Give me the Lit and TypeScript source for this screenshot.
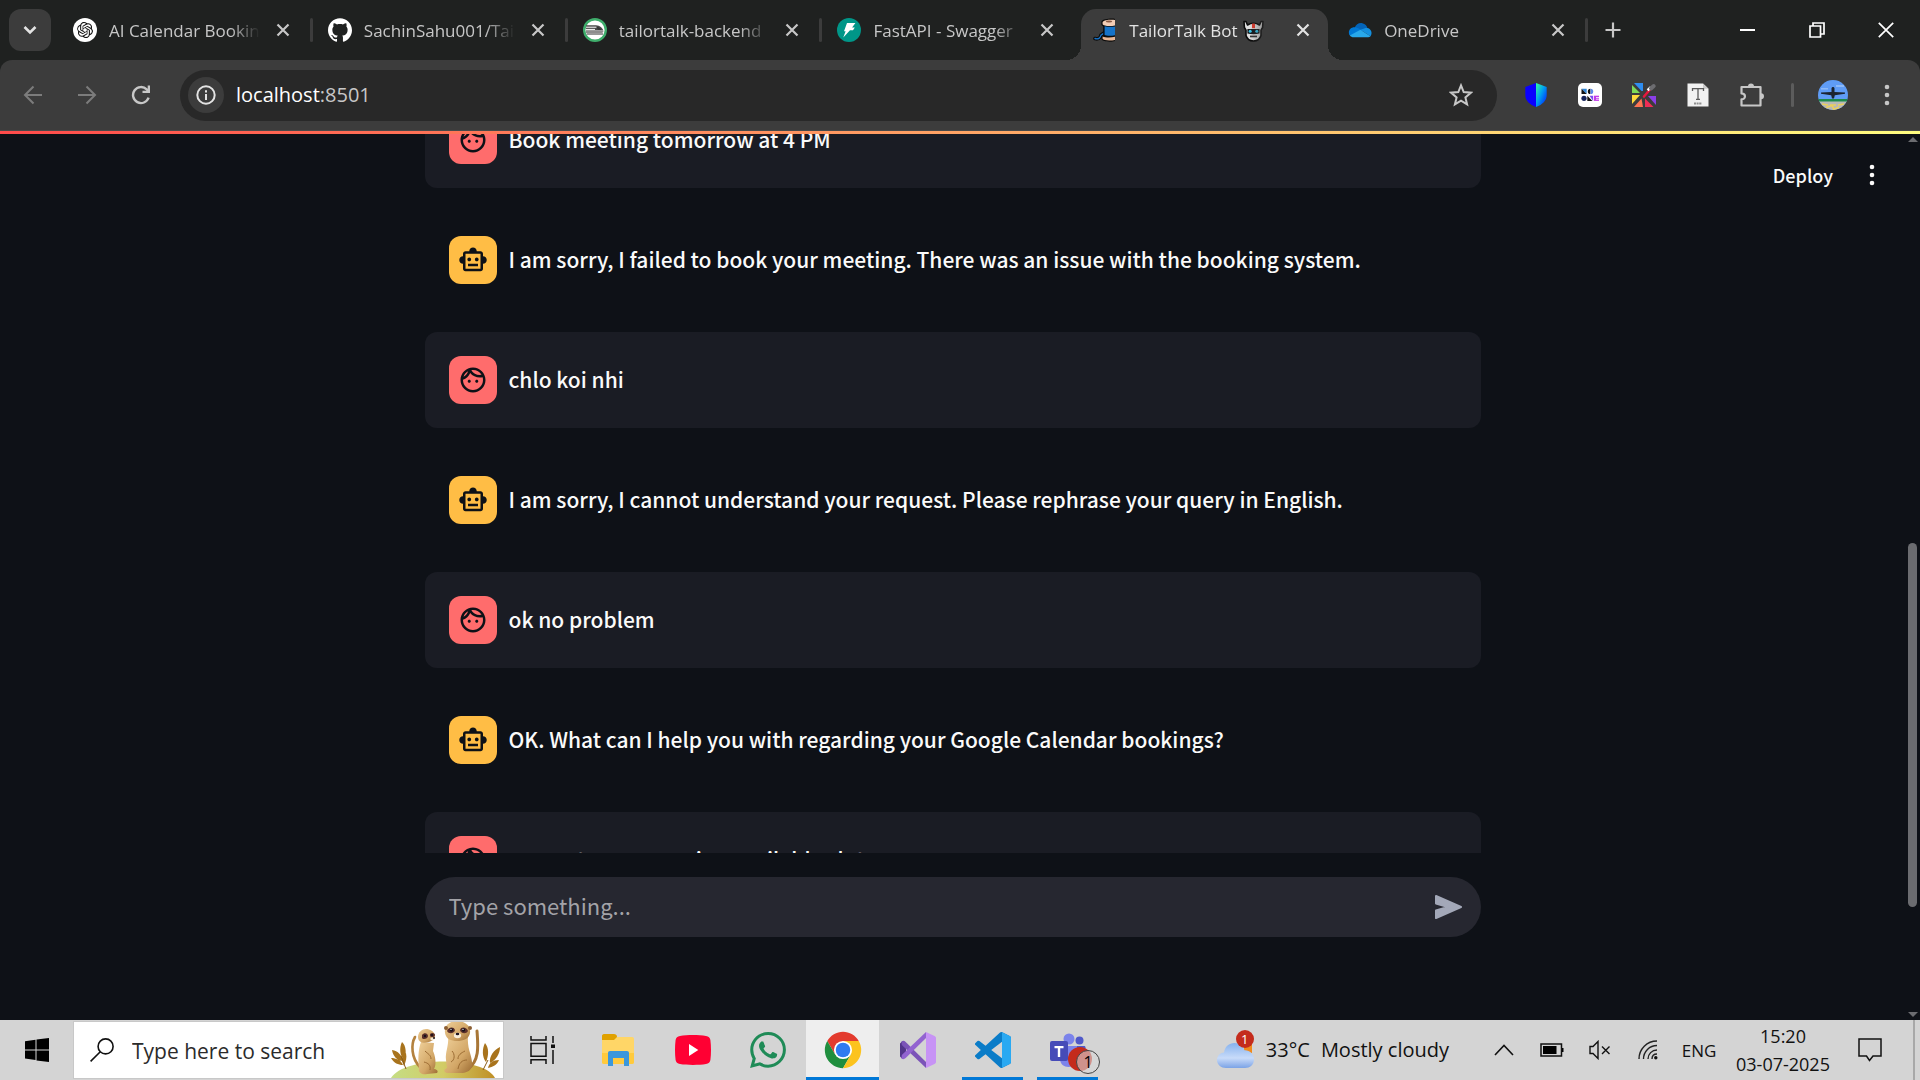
import { LitElement, html, svg, css, nothing } from "lit";
import type { TemplateResult, SVGTemplateResult } from "lit";
import { customElement, property, query } from "lit/decorators.js";
import { classMap } from "lit/directives/class-map.js";
import { styleMap } from "lit/directives/style-map.js";

type Role = "user" | "assistant";

interface Message {
  role: Role;
  text: string;
}

interface Tab {
  title: string;
  icon: TemplateResult;
  active?: boolean;
  emoji?: TemplateResult;
  divider?: boolean;
}

const icon = (
  width: number,
  height: number,
  viewBox: string,
  body: SVGTemplateResult,
) => html`<svg
  width=${width}
  height=${height}
  viewBox=${viewBox}
  fill="none"
  aria-hidden="true"
>
  ${body}
</svg>`;

/* ---------- Tab icons ---------- */

const openAiIcon = icon(24, 24, "0 0 24 24", svg`
  <circle cx="12" cy="12" r="12" fill="#fff"/>
  <path transform="translate(4 4) scale(.667)" fill="#111" d="M22.2819 9.8211a5.9847 5.9847 0 0 0-.5157-4.9108 6.0462 6.0462 0 0 0-6.5098-2.9A6.0651 6.0651 0 0 0 4.9807 4.1818a5.9847 5.9847 0 0 0-3.9977 2.9 6.0462 6.0462 0 0 0 .7427 7.0966 5.98 5.98 0 0 0 .511 4.9107 6.051 6.051 0 0 0 6.5146 2.9001A5.9847 5.9847 0 0 0 13.2599 24a6.0557 6.0557 0 0 0 5.7718-4.2058 5.9894 5.9894 0 0 0 3.9977-2.9001 6.0557 6.0557 0 0 0-.7475-7.0729zm-9.022 12.6081a4.4755 4.4755 0 0 1-2.8764-1.0408l.1419-.0804 4.7783-2.7582a.7948.7948 0 0 0 .3927-.6813v-6.7369l2.02 1.1686a.071.071 0 0 1 .038.052v5.5826a4.504 4.504 0 0 1-4.4945 4.4944zm-9.6607-4.1254a4.4708 4.4708 0 0 1-.5346-3.0137l.142.0852 4.783 2.7582a.7712.7712 0 0 0 .7806 0l5.8428-3.3685v2.3324a.0804.0804 0 0 1-.0332.0615L9.74 19.9502a4.4992 4.4992 0 0 1-6.1408-1.6464zM2.3408 7.8956a4.485 4.485 0 0 1 2.3655-1.9728V11.6a.7664.7664 0 0 0 .3879.6765l5.8144 3.3543-2.0201 1.1685a.0757.0757 0 0 1-.071 0l-4.8303-2.7865A4.504 4.504 0 0 1 2.3408 7.872zm16.5963 3.8558L13.1038 8.364 15.1192 7.2a.0757.0757 0 0 1 .071 0l4.8303 2.7913a4.4944 4.4944 0 0 1-.6765 8.1042v-5.6772a.79.79 0 0 0-.407-.667zm2.0107-3.0231l-.142-.0852-4.7735-2.7818a.7759.7759 0 0 0-.7854 0L9.409 9.2297V6.8974a.0662.0662 0 0 1 .0284-.0615l4.8303-2.7866a4.4992 4.4992 0 0 1 6.6802 4.66zM8.3065 12.863l-2.02-1.1638a.0804.0804 0 0 1-.038-.0567V6.0742a4.4992 4.4992 0 0 1 7.3757-3.4537l-.142.0805L8.704 5.459a.7948.7948 0 0 0-.3927.6813zm1.0976-2.3654l2.602-1.4998 2.6069 1.4998v2.9994l-2.5974 1.4997-2.6067-1.4997Z"/>`);

const gitHubIcon = icon(24, 24, "0 0 24 24", svg`
  <path fill="#fff" d="M12 .297c-6.63 0-12 5.373-12 12 0 5.303 3.438 9.8 8.205 11.385.6.113.82-.258.82-.577 0-.285-.01-1.04-.015-2.04-3.338.724-4.042-1.61-4.042-1.61C4.422 18.07 3.633 17.7 3.633 17.7c-1.087-.744.084-.729.084-.729 1.205.084 1.838 1.236 1.838 1.236 1.07 1.835 2.809 1.305 3.495.998.108-.776.417-1.305.76-1.605-2.665-.3-5.466-1.332-5.466-5.93 0-1.31.465-2.38 1.235-3.22-.135-.303-.54-1.523.105-3.176 0 0 1.005-.322 3.3 1.23.96-.267 1.98-.399 3-.405 1.02.006 2.04.138 3 .405 2.28-1.552 3.285-1.23 3.285-1.23.645 1.653.24 2.873.12 3.176.765.84 1.23 1.91 1.23 3.22 0 4.61-2.805 5.625-5.475 5.92.42.36.81 1.096.81 2.22 0 1.606-.015 2.896-.015 3.286 0 .315.21.69.825.57C20.565 22.092 24 17.592 24 12.297c0-6.627-5.373-12-12-12"/>`);

const trainIcon = icon(24, 24, "0 0 24 24", svg`
  <circle cx="12" cy="12" r="10.8" fill="#fff" stroke="#3fae6c" stroke-width="2.4"/>
  <path fill="#4a4a4a" d="M3 7.2h10c4 .3 6.600 2.600 7.400 5.400H3z"/>
  <path stroke="#fff" stroke-width="1" d="M3 9.200h10.500M3 11.400h9"/>
  <path fill="#8d8d8d" d="M3 12.800h17.400c.2 1.400-.6 2.200-2 2.200H3z"/>
  <path fill="#333" d="M13.500 8.800c2.400.1 3.900 1.400 4.600 3h-3.200z"/>
  <path stroke="#333" stroke-width="1" d="M3.600 16h16.600"/>`);

const fastApiIcon = icon(24, 24, "0 0 24 24", svg`
  <circle cx="12" cy="12" r="12" fill="#009688"/>
  <path fill="#fff" d="M10 5h8.400l-3.300 4.600h2.700L16 12.300h-3L6.300 19.400l2.300-6.100H7z"/>`);

const spoolIcon = icon(24, 24, "0 0 24 24", svg`
  <path stroke="#0b0b0b" stroke-width="3.600" stroke-linecap="round" d="M2 20.500c3.200 1 5.400-.4 6-3.400l3-2"/>
  <path stroke="#1673c8" stroke-width="1.400" stroke-linecap="round" d="M2 20.500c3.200 1 5.400-.4 6-3.400l3-2"/>
  <path fill="#0b0b0b" d="M8.400 3.400C10 .6 20 0 22 1v22c-4 1.300-12.400.8-13.600-1.700v-3l1.800-1.600V8.600L8.400 7z"/>
  <path fill="#f3cdb5" d="M9.600 4C11 1.600 19 1.400 22 2v5.500c-5 1.200-11.600.6-12.400-1.200z"/>
  <path fill="#1673c8" d="M11.600 8.200c3 .8 7 .9 10.400.2v8.800c-4 .8-8.400.7-10.400-.2z"/>
  <path fill="#e9b795" d="M9.600 18.400c3 1.500 8.400 1.400 12.400.4v3.100c-4.400 1-11.400.8-12.400-1.100z"/>
  <ellipse cx="16" cy="3.400" rx="3.200" ry="1" fill="#8a5a44"/>`);

const cyborgIcon = icon(21, 22, "0 0 21 22", svg`
  <path fill="#dedede" stroke="#0b0b0b" stroke-width="1.600" stroke-linejoin="round" d="M1 1.500h2L4.500 5C8 2.600 13 2.600 16.500 5L18 1.500h2l-.4 6-1.600 2.700v5.300c-1 3.400-4 5.500-7.500 5.500S4 18.900 3 15.500v-5.300L1.400 7.500z"/>
  <path fill="#e23b2e" d="M9 3.600h3v4.600H9z"/>
  <path fill="#17191c" d="M4.400 9h12.200v4.600c-3.600 1-8.600 1-12.200 0z"/>
  <circle cx="7.200" cy="11.300" r="1.500" fill="#35c3e8"/><circle cx="13.800" cy="11.300" r="1.500" fill="#35c3e8"/>
  <path fill="#333" d="M7 15.600h7v1.700H7z"/>`);

const oneDriveIcon = icon(24, 16, "0 0 26 18", svg`
  <path fill="#0364b8" d="M7 6.500C8.400 2.300 12 .6 15.600 1.300c3.200.6 5.200 3 5.800 5.700L13 11z"/>
  <path fill="#0078d4" d="M1 14.500C-.8 9.600 2.400 5.800 6.600 5.800c2 0 3.400.6 5 1.600L15 9.500 6 17z"/>
  <path fill="#1490df" d="m13.500 8.600 4.200-1.400c4.300-1.600 8.300 1 8.300 5.200 0 1.400-.5 2.600-1.200 3.500z"/>
  <path fill="#28a8ea" d="m1.500 15.200 12-6.600 11.300 7.300c-.9.800-2 1.300-3.500 1.300H6c-2 0-3.500-.8-4.500-2z"/>`);

/* ---------- Browser controls ---------- */

const closeIcon = icon(14, 14, "0 0 14 14", svg`<path stroke="currentColor" stroke-width="2.200" d="m1.500 1.500 11 11m0-11-11 11"/>`);
const plusIcon = icon(16, 16, "0 0 16 16", svg`<path stroke="currentColor" stroke-width="2.200" d="M8 .5v15M.5 8h15"/>`);
const chevronIcon = icon(14, 10, "0 0 14 10", svg`<path stroke="currentColor" stroke-width="2.600" d="m1.500 2 5.500 5.500L12.500 2"/>`);
const minimizeIcon = icon(16, 16, "0 0 16 16", svg`<path fill="currentColor" d="M0 7h15v2H0z"/>`);
const restoreIcon = icon(16, 16, "0 0 16 16", svg`<path stroke="currentColor" stroke-width="1.700" d="M1 4h10.500v11H1zM4 4V1h11v11h-3.500"/>`);
const windowCloseIcon = icon(16, 16, "0 0 16 16", svg`<path stroke="currentColor" stroke-width="1.700" d="m.8.800 14.400 14.400m0-14.400L.8 15.200"/>`);
const backIcon = icon(20, 20, "0 0 20 20", svg`<path stroke="currentColor" stroke-width="2" d="M19 10H2m8.500-8.500L2 10l8.500 8.500"/>`);
const forwardIcon = icon(20, 20, "0 0 20 20", svg`<path stroke="currentColor" stroke-width="2" d="M1 10h17M9.500 1.500 18 10l-8.500 8.500"/>`);
const reloadIcon = icon(20, 20, "0 0 20 20", svg`
  <path stroke="currentColor" stroke-width="2.400" d="M17.600 12.700A8 8 0 1 1 15.700 4.400L17.500 6.300"/>
  <path fill="currentColor" d="M19 .5V8h-7.500V5.700h5.200V.5z"/>`);
const infoIcon = icon(20, 20, "0 0 20 20", svg`
  <circle cx="10" cy="10" r="8.700" stroke="currentColor" stroke-width="2"/>
  <path fill="currentColor" d="M9 9h2v6H9zM9 5.200h2v2.200H9z"/>`);
const starIcon = icon(24, 24, "0 0 24 24", svg`<path stroke="currentColor" stroke-width="2" d="m12 2.400 2.700 6.700 7.200.6-5.500 4.700 1.700 7L12 17.600l-6.100 3.800 1.700-7-5.500-4.700 7.200-.6z"/>`);
const dotsIcon = icon(6, 22, "0 0 6 22", svg`<circle cx="3" cy="3" r="2.300" fill="currentColor"/><circle cx="3" cy="11" r="2.300" fill="currentColor"/><circle cx="3" cy="19" r="2.300" fill="currentColor"/>`);
const puzzleIcon = icon(26, 26, "0 0 26 26", svg`
  <path stroke="currentColor" stroke-width="2.200" stroke-linejoin="round" d="M2.500 5h19v18.500h-19v-6.200c4.400.2 4.800-5.600 0-5.900z"/>
  <path fill="currentColor" d="M9 4.500a3 3 0 0 1 6 0zM22 11.300a3 3 0 0 1 0 6z"/>`);

const shieldIcon = icon(24, 24, "0 0 24 24", svg`
  <defs><linearGradient id="shield" x1="0" y1="0" x2="1" y2="1"><stop stop-color="#36ff96"/><stop offset=".45" stop-color="#00a2f0"/><stop offset="1" stop-color="#0010ff"/></linearGradient></defs>
  <path fill="#0a00ff" d="M12 0 1.300 4v8c0 5.600 4.200 9.600 10.700 12z"/>
  <path fill="url(#shield)" d="m12 0 10.700 4v8c0 5.600-4.200 9.600-10.700 12z"/>`);
const shapesIcon = icon(24, 24, "0 0 24 24", svg`
  <rect width="24" height="24" rx="5" fill="#fff"/>
  <path fill="#2e86d8" d="M3.500 5.800h5.200v5.200z"/><path fill="#111" d="M3.500 5.800V11h5.200z"/>
  <path fill="#111" d="M12.400 5.800V11a2.600 2.600 0 0 1 0-5.200"/><path fill="#5b8be8" d="M12.600 5.800a2.600 2.600 0 0 1 0 5.200z"/>
  <circle cx="6" cy="15.300" r="2.600" fill="#16245a"/><path fill="#111" d="M9.300 12.700v5.200h5.200z"/>
  <path fill="#7a4df0" d="M11.500 12.700H15v5z"/><path fill="#c23bea" d="M15.800 12.700H21v5.200h-5.200z"/><path stroke="#fff" stroke-width=".8" d="M18 14.500h3M18 16.200h3"/>`);
const wheelIcon = icon(26, 26, "0 0 26 26", svg`
  <path fill="#2f8df0" d="M3 1h9v8L10.500 9z"/><path fill="#7ed957" d="m1 3 8 8H1z"/>
  <path fill="#ffd93b" d="M1 13h8l-8 9z"/><path fill="#ff7452" d="m10.500 16.500 1.500 8.500H3z"/>
  <path fill="#ef2d56" d="M14 16.500 22.500 25H14z"/><path fill="#8b3fe8" d="M17 14h8v9z"/>
  <path stroke="#e5173f" stroke-width="2.600" stroke-linecap="round" d="m13 14.500 6-7"/>
  <path stroke="#fff" stroke-width="2.600" d="m16.600 8.300 3.300-3"/>
  <path stroke="#6c6c70" stroke-width="4" stroke-linecap="round" d="M20 6.500 22.700 4"/>`);
const textFileIcon = icon(22, 24, "0 0 22 24", svg`
  <path fill="#f1f1f1" d="M.500.500H16l5.500 5.200v17.800H.500z"/><path fill="#c9c9c9" d="M16 .5v5.200h5.500z"/>
  <path stroke="#5a5a5a" stroke-width="1.300" d="M5.500 8V5.700h11V8M11 5.700v10.600M9 16.300h4"/>
  <path stroke="#8f8f8f" stroke-width="2" stroke-dasharray="2 .6" d="M7 20.500h8"/>`);
const avatarIcon = icon(30, 30, "0 0 30 30", svg`
  <defs><clipPath id="avatar"><circle cx="15" cy="15" r="15"/></clipPath></defs>
  <g clip-path="url(#avatar)">
    <path fill="#5f9cf5" d="M0 0h30v30H0z"/><path fill="#8db9f7" d="M18 5h8v2h-8zM3 8h7v1.500H3z"/>
    <path fill="#1c8a4c" d="M0 19h30v3H0z"/><path fill="#b9b9b5" d="M0 21.500h30V30H0z"/>
    <path stroke="#ecd05c" stroke-width="1.600" d="m4 24 6 1m2 0 6 0m2 0 6-1M8 27.500l6-2 2 4 5-2.500"/>
    <path fill="#1b2430" d="M13.500 8.500c0-2 3-2 3 0V12l10.500.5v1.300L16.800 15.200 16 18.500h-2l-.8-3.300L3 13.800v-1.300l10.500-.5z"/>
  </g>`);

/* ---------- Chat icons ---------- */

const faceIcon = icon(30, 30, "0 0 24 24", svg`
  <path fill="#0e1117" d="M10.250 13c0 .69-.56 1.250-1.250 1.250S7.750 13.690 7.750 13s.56-1.250 1.250-1.250 1.250.56 1.250 1.250zM15 11.750c-.69 0-1.250.56-1.250 1.250s.56 1.250 1.250 1.250 1.250-.56 1.250-1.250-.56-1.250-1.250-1.250zm7 .25c0 5.520-4.480 10-10 10S2 17.520 2 12 6.480 2 12 2s10 4.480 10 10zM10.660 4.120C12.060 6.440 14.600 8 17.500 8c.46 0 .91-.05 1.340-.12C17.440 5.560 14.900 4 12 4c-.46 0-.91.05-1.340.12zM4.420 9.470c1.710-.97 3.030-2.550 3.660-4.440C6.370 6 5.050 7.580 4.420 9.470zM20 12c0-.78-.12-1.530-.33-2.240-.7.15-1.420.24-2.170.24-3.130 0-5.920-1.440-7.760-3.690C8.690 8.870 6.600 10.880 4 11.860c.01.04 0 .09 0 .14 0 4.410 3.590 8 8 8s8-3.590 8-8z"/>`);
const robotIcon = icon(30, 30, "0 0 24 24", svg`
  <path fill="#0e1117" d="M20 9V7c0-1.100-.9-2-2-2h-3c0-1.660-1.340-3-3-3S9 3.340 9 5H6c-1.100 0-2 .9-2 2v2c-1.660 0-3 1.340-3 3s1.340 3 3 3v4c0 1.100.9 2 2 2h12c1.100 0 2-.9 2-2v-4c1.660 0 3-1.340 3-3s-1.340-3-3-3zm-2 10H6V7h12v12zm-9-6c-.83 0-1.500-.67-1.500-1.500S8.170 10 9 10s1.500.67 1.500 1.500S9.830 13 9 13zm7.500-1.500c0 .83-.67 1.500-1.500 1.500s-1.500-.67-1.500-1.500.67-1.500 1.500-1.500 1.500.67 1.500 1.500zM8 15h8v2H8v-2z"/>`);
const sendIcon = icon(27, 24, "0 0 27 24", svg`<path fill="currentColor" stroke="currentColor" stroke-width="2" stroke-linejoin="round" d="m1 1 25 11L1 23v-7.500L13 12 1 8.500z"/>`);

/* ---------- Taskbar icons ---------- */

const windowsIcon = icon(24, 24, "0 0 24 24", svg`<path fill="#000" d="M0 3.300 10.500 1.700v9.700H0zM11.500 1.500 24 0v11.400H11.500zM0 12.400h10.500v9.700L0 20.600zM11.500 12.400H24V24l-12.500-1.600z"/>`);
const searchIcon = icon(24, 24, "0 0 24 24", svg`<circle cx="15.600" cy="8.400" r="7.500" stroke="#111" stroke-width="1.600"/><path stroke="#111" stroke-width="1.600" d="M10.300 13.700.600 23.400"/>`);
const taskViewIcon = icon(26, 28, "0 0 26 28", svg`
  <path stroke="#111" stroke-width="1.500" d="M1 0v4h15V0M1 7.500h15v12.800H1zM1 28v-4.200h15V28M23 0v7M23 14v14"/>
  <path fill="#111" d="M21 8.500h4V12h-4z"/>`);
const folderIcon = icon(34, 32, "0 0 34 32", svg`
  <path fill="#e0a100" d="M1 2c0-1 .6-2 2-2h10c1.500 0 3 1 3 2.500V8H1z"/>
  <path fill="#ffd667" d="M1 6h12l3-3h15c1.300 0 2 .8 2 2v23c0 1-.7 2-2 2H3c-1.300 0-2-1-2-2z"/>
  <path fill="#ffca3d" d="M1 19h32v9c0 1-.7 2-2 2H3c-1.300 0-2-1-2-2z"/>
  <path fill="#3b97dc" d="M7 32V19c0-1.300.8-2 2-2h17c1.200 0 2 .7 2 2v13h-5v-8H12v8z"/>`);
const youTubeIcon = icon(36, 30, "0 0 36 30" , svg`
  <path fill="#ff0033" d="M5 1C12-.2 24-.2 31 1c2.600.4 4 1.600 4.400 4 .8 6 .8 14 0 20-.4 2.400-1.800 3.600-4.400 4-7 1.200-19 1.200-26 0-2.600-.4-4-1.600-4.400-4-.8-6-.8-14 0-20C1 2.600 2.400 1.400 5 1z"/>
  <path fill="#fff" d="m14 9 9.300 6-9.300 6z"/>`);
const whatsAppIcon = icon(36, 36, "0 0 24 24", svg`
  <path fill="#1f8b57" d="M17.472 14.382c-.297-.149-1.758-.867-2.030-.967-.273-.099-.471-.148-.67.15-.197.297-.767.966-.94 1.164-.173.199-.347.223-.644.075-.297-.15-1.255-.463-2.390-1.475-.883-.788-1.480-1.761-1.653-2.059-.173-.297-.018-.458.13-.606.134-.133.298-.347.446-.52.149-.174.198-.298.298-.497.099-.198.05-.371-.025-.52-.075-.149-.669-1.612-.916-2.207-.242-.579-.487-.5-.669-.51-.173-.008-.371-.01-.57-.01-.198 0-.52.074-.792.372-.272.297-1.040 1.016-1.040 2.479 0 1.462 1.065 2.875 1.213 3.074.149.198 2.096 3.200 5.077 4.487.709.306 1.262.489 1.694.625.712.227 1.360.195 1.871.118.571-.085 1.758-.719 2.006-1.413.248-.694.248-1.289.173-1.413-.074-.124-.272-.198-.57-.347m-5.421 7.403h-.004a9.870 9.870 0 01-5.031-1.378l-.361-.214-3.741.982.998-3.648-.235-.374a9.860 9.860 0 01-1.510-5.260c.001-5.450 4.436-9.884 9.888-9.884 2.640 0 5.122 1.030 6.988 2.898a9.825 9.825 0 012.893 6.994c-.003 5.450-4.437 9.884-9.885 9.884m8.413-18.297A11.815 11.815 0 0012.050 0C5.495 0 .16 5.335.157 11.892c0 2.096.547 4.142 1.588 5.945L.057 24l6.305-1.654a11.882 11.882 0 005.683 1.448h.005c6.554 0 11.890-5.335 11.893-11.893a11.821 11.821 0 00-3.480-8.413z"/>`);
const chromeIcon = icon(38, 38, "1 1 46 46", svg`
  <path fill="#e33b2e" d="M4.950 13a22 22 0 0 1 38.100 0H24l-9.530 16.500z"/>
  <path fill="#1f8e3e" d="M4.950 13A22 22 0 0 0 24 46l9.530-16.500H14.470z"/>
  <path fill="#fcc31e" d="M43.050 13A22 22 0 0 1 24 46l9.530-16.500L24 13z"/>
  <circle cx="24" cy="24" r="11" fill="#fff"/><circle cx="24" cy="24" r="8.800" fill="#2f7bf0"/>`);
const visualStudioIcon = icon(36, 36, "0 0 36 36", svg`
  <path fill="#52358a" d="M0 11.500 2.500 9 6 11.500v13L2.500 27 0 24.500z"/>
  <path fill="#7b54b8" d="M1.500 9.500c1.600-1 2.800-.8 4.200.5L26 30v6L1.800 13z"/>
  <path fill="#9263d0" d="M1.500 26.500c1.600 1 2.800.8 4.200-.5L26 6V0L1.800 23z"/>
  <path fill="#c793f5" d="M26 0l8.500 4c1 .5 1.500 1.200 1.500 2.200v23.600c0 1-.5 1.700-1.500 2.200L26 36z"/>`);
const vsCodeIcon = icon(36, 36, "0 0 24 24", svg`
  <path fill="#0a7cc8" d="M23.150 2.587L18.210.21a1.494 1.494 0 0 0-1.705.29l-9.460 8.630-4.120-3.128a.999.999 0 0 0-1.276.057L.327 7.261A1 1 0 0 0 .326 8.740L3.899 12 .326 15.260a1 1 0 0 0 .001 1.479L1.650 17.940a.999.999 0 0 0 1.276.057l4.120-3.128 9.460 8.630a1.492 1.492 0 0 0 1.704.29l4.942-2.377A1.500 1.500 0 0 0 24 20.060V3.939a1.500 1.500 0 0 0-.85-1.352zm-5.146 14.861L10.826 12l7.178-5.448v10.896z"/>
  <path fill="#2aa9f2" d="M18 .15 23.150 2.587A1.500 1.500 0 0 1 24 3.939V20.060a1.500 1.500 0 0 1-.85 1.352L18 23.850z"/>`);
const teamsIcon = icon(36, 36, "0 0 36 36", svg`
  <circle cx="19" cy="7" r="5.500" fill="#7b83eb"/><circle cx="29.500" cy="8.500" r="4" fill="#5059c9"/>
  <path fill="#5059c9" d="M24 14h10c1 0 1.500.6 1.500 1.500V23c0 4-3 6.500-6 6.500z"/>
  <path fill="#7b83eb" d="M10 14h17v13c0 5-4 8-8.500 8S10 32 10 27z"/>
  <rect y="9" width="18" height="20" rx="2" fill="#464bb8"/>
  <path fill="#fff" d="M4.500 14h9v2.200h-3.300V25H7.800v-8.800H4.500z"/>`);
const cloudIcon = icon(38, 38, "0 0 38 38", svg`
  <defs><linearGradient id="cloud" x1="0" y1="0" x2="0" y2="1"><stop stop-color="#86b2ee"/><stop offset=".6" stop-color="#c8dbf9"/><stop offset="1" stop-color="#7ba3e6"/></linearGradient></defs>
  <path fill="#f08a1d" d="M27 12h8v10h-8z"/>
  <path fill="url(#cloud)" d="M9 37c-5 0-9-3.300-9-8 0-4.200 3-7 7-7.500C8 15.500 12 12 17.500 12c5 0 8.800 2.800 10 7.300C32.500 19 37 23 37 28.500c0 5-4 8.500-9 8.500z"/>`);
const caretUpIcon = icon(20, 12, "0 0 20 12", svg`<path stroke="#111" stroke-width="1.600" d="m1 11 9-9.500 9 9.500"/>`);
const batteryIcon = icon(24, 14, "0 0 24 14", svg`<path stroke="#111" stroke-width="1.500" d="M1 1h20.500v12H1z"/><path fill="#000" d="M3 3h13.500v8H3zM22 5h1.500v4H22z"/>`);
const muteIcon = icon(22, 20, "0 0 22 20", svg`<path stroke="#111" stroke-width="1.400" d="M1 6.500h3L9 1.500v17l-5-5H1zM13 6.500l7.500 7.500m0-7.500L13 14"/>`);
const wifiIcon = icon(20, 20, "0 0 20 20", svg`
  <path stroke="#222" stroke-width="1.400" d="M1 19C1 9 9 1 19 1M5.500 19C5.500 11.500 11.500 5.500 19 5.500M10 19c0-5 4-9 9-9M14 19c0-3 2-5 5-5"/>
  <circle cx="17.800" cy="17.800" r="1.700" fill="#111"/>`);
const noticeIcon = icon(24, 24, "0 0 24 24", svg`<path stroke="#111" stroke-width="1.500" d="M1 1h22v17h-8l-3.500 4.500L8.500 18H1z"/>`);

const meerkats = icon(112, 58, "0 0 112 58", svg`
  <defs>
    <linearGradient id="hill" x1="0" y1="0" x2="1" y2="0"><stop stop-color="#c5dd84"/><stop offset=".5" stop-color="#d2cc66"/><stop offset="1" stop-color="#bf8f26"/></linearGradient>
    <linearGradient id="fur" x1="0" y1="0" x2="1" y2="1"><stop stop-color="#efd09a"/><stop offset=".6" stop-color="#d3a767"/><stop offset="1" stop-color="#9c6c33"/></linearGradient>
  </defs>
  <path fill="url(#hill)" d="M1 58C14 36 94 36 105 58z"/>
  <path stroke="#b4823f" stroke-width="2.600" stroke-linecap="round" d="M30 47C21 38 21 24 25 17"/>
  <path stroke="#a87636" stroke-width="3" stroke-linecap="round" d="M78 49C90 40 88 25 87 11"/>
  <g fill="#a8731c">
    <path d="M12 22c4 3 5 12 2 18-4-4-5-12-2-18zM2 30c6 1 10 5 11 11C7 41 3 36 2 30zM16 33c1 5 0 8-2 13l-3-7zM1 38c5 0 10 2 12 7-5 0-9-2-12-7z"/>
    <path d="M95 23c4 5 4 12 1 19-4-5-4-13-1-19zM110 27c0 7-4 13-10 16-1-7 4-13 10-16zM109 40c-2 5-6 7-11 8 1-5 5-8 11-8z"/>
  </g>
  <path stroke="#8a5b15" stroke-width="1" d="m11 36 5 13m82-9-5 10"/>
  <path fill="url(#fur)" d="M31 22c-3 8-3 18-2 27-1 4 4 6 8 5l10-1c2-2-1-4-3-4 3-5 1-14-1-18l1-8z"/>
  <path fill="url(#fur)" d="M28 17c0-5 4-8 8-8s8 2 9 7c0 3-3 5-6 6-6 2-11 0-11-5z"/>
  <path fill="#5a2f2a" d="M32 15c2-3 6-2 6 1s-5 4-6 2zM40 14c2-2 5-1 5 1s-4 3-5 1z"/>
  <circle cx="35" cy="16" r="1.200" fill="#17111a"/><circle cx="42" cy="15" r="1.100" fill="#17111a"/>
  <ellipse cx="42.500" cy="19" rx="2.200" ry="1.400" fill="#f7ead3"/><circle cx="44" cy="18" r="1" fill="#1d1420"/>
  <path fill="url(#fur)" d="M58 17c1 9-3 15-2 23l1 8c-3 1-4 4 0 5h16c6-1 10-4 9-11-1-9-5-14-4-26z"/>
  <path stroke="#9c6c33" stroke-width="1" d="M62 31c3 3 3 9-1 11m14-11c-4 2-7 4-7 8m9 1c-5 0-8 3-9 9M35 31c3 3 6 4 6 8m-7 3c4 1 7 3 6 8"/>
  <path fill="url(#fur)" d="M55 13C54 5 60 1 67 1s14 4 13 12c-1 6-7 8-13 8s-11-2-12-8z"/>
  <circle cx="56" cy="8" r="2" fill="#8c5f33"/><circle cx="80" cy="8" r="2" fill="#8c5f33"/>
  <path fill="#5a2f2a" d="M57 11c1-4 7-5 8-1 0 3-6 5-8 1zM70 10c1-4 7-3 8 1-2 4-8 2-8-1z"/>
  <circle cx="61.500" cy="10" r="1.700" fill="#17111a"/><circle cx="73.500" cy="10" r="1.700" fill="#17111a"/>
  <circle cx="61" cy="9.400" r=".6" fill="#fff"/><circle cx="73" cy="9.400" r=".6" fill="#fff"/>
  <ellipse cx="67.500" cy="15.500" rx="3.600" ry="2.800" fill="#f9edd8"/><ellipse cx="67.500" cy="14" rx="1.800" ry="1.200" fill="#1d1420"/>`);

/* ---------- Data ---------- */

const TABS: Tab[] = [
  { title: "AI Calendar Bookin", icon: openAiIcon, divider: true },
  { title: "SachinSahu001/Tai", icon: gitHubIcon, divider: true },
  { title: "tailortalk-backend", icon: trainIcon, divider: true },
  { title: "FastAPI - Swagger", icon: fastApiIcon },
  { title: "TailorTalk Bot", icon: spoolIcon, emoji: cyborgIcon, active: true },
  { title: "OneDrive", icon: oneDriveIcon, divider: true },
];

const MESSAGES: Message[] = [
  { role: "user", text: "Book meeting tomorrow at 4 PM" },
  { role: "assistant", text: "I am sorry, I failed to book your meeting. There was an issue with the booking system." },
  { role: "user", text: "chlo koi nhi" },
  { role: "assistant", text: "I am sorry, I cannot understand your request. Please rephrase your query in English." },
  { role: "user", text: "ok no problem" },
  { role: "assistant", text: "OK. What can I help you with regarding your Google Calendar bookings?" },
  { role: "user", text: "suggest me upcoming available slots" },
];

const EXTENSIONS = [
  { name: "Privacy shield", icon: shieldIcon },
  { name: "Shapes", icon: shapesIcon },
  { name: "Color picker", icon: wheelIcon },
  { name: "Text viewer", icon: textFileIcon },
  { name: "Extensions", icon: puzzleIcon },
];

const APPS: { name: string; icon: TemplateResult; state?: string; badge?: string }[] = [
  { name: "Task View", icon: taskViewIcon },
  { name: "File Explorer", icon: folderIcon },
  { name: "YouTube", icon: youTubeIcon },
  { name: "WhatsApp", icon: whatsAppIcon },
  { name: "Google Chrome", icon: chromeIcon, state: "current" },
  { name: "Visual Studio", icon: visualStudioIcon },
  { name: "Visual Studio Code", icon: vsCodeIcon, state: "open" },
  { name: "Microsoft Teams", icon: teamsIcon, state: "open", badge: "1" },
];

const SCROLL_OFFSET = 42;

/* Lengths of the track above, under and below the scrollbar thumb. */
const SCROLL_TRACK = { before: 398, thumb: 365, after: 101 };

const reset = css`
  * {
    box-sizing: border-box;
  }
  button,
  input {
    margin: 0;
    padding: 0;
    border: 0;
    background: none;
    color: inherit;
    font: inherit;
    outline: none;
  }
  button {
    display: flex;
    align-items: center;
    justify-content: center;
  }
  svg {
    display: block;
    flex: none;
  }
`;

@customElement("chat-message")
export class ChatMessage extends LitElement {
  @property() role: Role = "user";
  @property() text = "";

  static styles = [
    reset,
    css`
      :host {
        display: block;
        flex: none;
      }
      .message {
        display: flex;
        align-items: center;
        gap: 12px;
        padding: 24px;
        border-radius: 12px;
      }
      .message.user {
        background: #1a1c24;
      }
      .avatar {
        display: flex;
        flex: none;
        align-items: center;
        justify-content: center;
        width: 48px;
        height: 48px;
        border-radius: 12px;
        background: #ffbd45;
      }
      .user .avatar {
        background: #ff6c6c;
      }
      .text {
        margin: 0;
        padding-bottom: 2px;
        font-size: 21px;
        font-weight: 500;
        line-height: 36px;
      }
    `,
  ];

  render() {
    const user = this.role === "user";
    return html`<article class=${classMap({ message: true, user })}>
      <div class="avatar">${user ? faceIcon : robotIcon}</div>
      <p class="text">${this.text}</p>
    </article>`;
  }
}

@customElement("app-root")
export class AppRoot extends LitElement {
  @query(".messages") private messages!: HTMLElement;

  static styles = [
    reset,
    css`
      :host {
        display: flex;
        flex-direction: column;
        height: 100vh;
        overflow: hidden;
        background: #1f2120;
        font-family: "Open Sans", "Noto Sans", sans-serif;
      }

      /* Tab strip */
      .strip {
        display: flex;
        flex: none;
        height: 60px;
        padding-left: 9px;
        color: #c7c7c7;
      }
      .tab-search {
        align-self: center;
        flex: none;
        width: 42px;
        height: 42px;
        margin-right: 6px;
        border-radius: 12px;
        background: #3c3c3c;
        color: #e3e3e3;
      }
      .tabs {
        display: flex;
        flex: 0 1 1530px;
        min-width: 0;
      }
      .tab {
        position: relative;
        display: flex;
        flex: 1 1 0;
        align-items: center;
        gap: 12px;
        min-width: 0;
        padding: 0 22px 0 16px;
      }
      .tab.divided::after {
        content: "";
        position: absolute;
        right: -1px;
        top: 18px;
        width: 3px;
        height: 24px;
        border-radius: 2px;
        background: #3c3c3c;
      }
      .tab.active {
        margin: 9px 4px 0 5px;
        padding: 0 18px 9px 12px;
        border-radius: 15px 15px 0 0;
        background: #3c3c3c;
        color: #e3e3e3;
      }
      .tab.active::before,
      .tab.active::after {
        content: "";
        position: absolute;
        bottom: 0;
        width: 15px;
        height: 15px;
      }
      .tab.active::before {
        left: -15px;
        background: radial-gradient(circle at 0 0, transparent 15px, #3c3c3c 15px);
      }
      .tab.active::after {
        right: -15px;
        background: radial-gradient(circle at 100% 0, transparent 15px, #3c3c3c 15px);
      }
      .tab-icon {
        display: flex;
        flex: none;
        align-items: center;
        justify-content: center;
        width: 24px;
        height: 24px;
      }
      .tab-title {
        display: flex;
        flex: 1;
        align-items: center;
        gap: 5px;
        min-width: 0;
        padding-top: 2px;
        color: inherit;
        font-size: 17px;
        line-height: 24px;
        text-decoration: none;
        white-space: nowrap;
        mask-image: linear-gradient(to right, #000 calc(100% - 30px), transparent);
      }
      .tab-close {
        flex: none;
        width: 14px;
        height: 24px;
        margin-left: 4px;
      }
      .new-tab {
        flex: none;
        width: 52px;
      }
      .window-controls {
        display: flex;
        flex: none;
        margin-left: auto;
        color: #fff;
      }
      .window-controls button {
        width: 69px;
      }

      /* Toolbar */
      .toolbar {
        display: flex;
        flex: none;
        align-items: center;
        height: 71px;
        padding: 0 6px;
        border-bottom: 1px solid #4a4a4a;
        border-radius: 12px 12px 0 0;
        background: #3c3c3c;
        color: #c7c7c7;
      }
      .toolbar button {
        flex: none;
        width: 54px;
        height: 42px;
      }
      .toolbar .muted {
        color: #7c7c7c;
      }
      .address {
        display: flex;
        flex: 1;
        align-items: center;
        gap: 12px;
        height: 51px;
        margin: 0 12px;
        padding: 0 9px 0 8px;
        border-radius: 26px;
        background: #282828;
      }
      .toolbar .site-info {
        width: 36px;
        height: 36px;
        border-radius: 50%;
        background: #3c3c3c;
        color: #e3e3e3;
      }
      .url {
        flex: 1;
        min-width: 0;
        font-size: 20px;
        line-height: 24px;
      }
      .host {
        color: #fff;
      }
      .rule {
        width: 3px;
        height: 24px;
        margin: 0 12px;
        border-radius: 2px;
        background: #5c5c5c;
      }

      /* Page */
      .page {
        position: relative;
        display: flex;
        flex: 1;
        min-height: 0;
        border-top: 3px solid;
        border-image: linear-gradient(to right, #ff4b4b, #fffd80) 1;
        background: #0e1117;
        color: #fafafa;
        font-family: "Noto Sans CJK SC", "Noto Sans", sans-serif;
      }
      .page-actions {
        position: absolute;
        top: 18px;
        right: 36px;
        display: flex;
        align-items: center;
        gap: 27px;
      }
      .page-actions button {
        height: 48px;
        padding-bottom: 2px;
        font-size: 18px;
        font-weight: 500;
        line-height: 24px;
      }
      .page-actions .page-menu {
        width: 24px;
      }
      .chat {
        display: flex;
        flex: 1;
        flex-direction: column;
        align-items: center;
        min-width: 0;
      }
      .messages {
        display: flex;
        flex: 1;
        flex-direction: column;
        gap: 24px;
        width: 100%;
        max-width: 1056px;
        min-height: 0;
        overflow: hidden;
      }
      .composer {
        display: flex;
        flex: none;
        align-items: center;
        width: 100%;
        max-width: 1056px;
        height: 60px;
        margin: 24px 0 83px;
        padding: 0 18px 0 24px;
        border-radius: 30px;
        background: #262730;
      }
      .composer input {
        flex: 1;
        min-width: 0;
        height: 36px;
        padding-bottom: 4px;
        font-size: 22px;
        line-height: 32px;
      }
      .composer input::placeholder {
        color: #a3a3a8;
        opacity: 1;
      }
      .composer button {
        width: 28px;
        height: 36px;
        color: #a3a8b8;
      }
      .scrollbar {
        display: flex;
        flex: none;
        flex-direction: column;
        align-items: center;
        justify-content: space-between;
        width: 15px;
        padding: 3px 0;
        color: #6b6c70;
      }
      .track {
        display: grid;
        flex: 1;
        width: 9px;
        margin: 4px 0;
      }
      .thumb {
        grid-row: 2;
        border-radius: 5px;
        background: #6b6c70;
      }

      /* Taskbar */
      .taskbar {
        display: flex;
        flex: none;
        align-items: stretch;
        height: 60px;
        background: #d4d4d4;
        color: #111;
      }
      .start {
        flex: none;
        width: 73px;
      }
      .search {
        display: flex;
        flex: 0 1 431px;
        align-items: center;
        gap: 18px;
        margin: 1px 0;
        padding: 0 1px 0 16px;
        border: 1px solid #c8c8c8;
        background: #fff;
        overflow: hidden;
      }
      .search input {
        flex: 1;
        min-width: 0;
        padding-top: 2px;
        font-size: 21px;
        line-height: 30px;
      }
      .search input::placeholder {
        color: #2b2b2b;
        opacity: 1;
      }
      .search svg:last-child {
        align-self: flex-end;
      }
      .apps {
        display: flex;
        flex: none;
        gap: 2px;
        margin-left: 2px;
      }
      .app {
        position: relative;
        width: 73px;
        border-bottom: 3px solid transparent;
        border-top: 3px solid transparent;
      }
      .app.current {
        border-color: #eee #eee #0078d7;
        background: #eee;
      }
      .app.open::after {
        content: "";
        position: absolute;
        right: 6px;
        bottom: -3px;
        left: 6px;
        height: 3px;
        background: #0078d7;
      }
      .badge-under,
      .badge {
        position: absolute;
        display: flex;
        align-items: center;
        justify-content: center;
        width: 24px;
        height: 24px;
        border-radius: 50%;
        font-size: 16px;
        line-height: 24px;
      }
      .badge-under {
        right: 12px;
        bottom: 6px;
        background: #c42b1c;
      }
      .badge {
        right: 4px;
        bottom: 3px;
        border: 1px solid #444;
        background: rgb(215 215 215 / 60%);
        color: #000;
      }
      .weather {
        gap: 11px;
        margin-left: auto;
        padding-right: 31px;
        font-size: 20px;
        line-height: 30px;
        white-space: nowrap;
      }
      .weather-icon {
        position: relative;
      }
      .alert {
        position: absolute;
        top: -1px;
        right: 1px;
        width: 18px;
        height: 18px;
        border-radius: 50%;
        background: #c42b1c;
        color: #fff;
        font-size: 13px;
        line-height: 18px;
      }
      .tray button {
        width: 48px;
      }
      .tray {
        display: flex;
        flex: none;
      }
      .tray .language {
        width: 54px;
        font-size: 17px;
      }
      .tray .clock {
        flex-direction: column;
        width: 114px;
        font-size: 18px;
        line-height: 28px;
      }
      .tray .notices {
        width: 60px;
        margin-right: 13px;
      }
      .tray .desktop {
        width: 7px;
        border-left: 2px solid #a8a8a8;
      }
    `,
  ];

  protected firstUpdated() {
    this.updateComplete.then(async () => {
      const items = Array.from(this.messages.querySelectorAll("chat-message")) as LitElement[];
      await Promise.all(items.map((item) => item.updateComplete));
      this.messages.scrollTop = SCROLL_OFFSET;
    });
  }

  private renderTab(tab: Tab) {
    return html`<div class=${classMap({ tab: true, active: !!tab.active, divided: !!tab.divider })}>
      <span class="tab-icon">${tab.icon}</span>
      <a class="tab-title" href="#" aria-current=${tab.active ? "page" : nothing}>${tab.title}${tab.emoji ?? nothing}</a>
      <button class="tab-close" aria-label="Close tab">${closeIcon}</button>
    </div>`;
  }

  private renderBrowser() {
    return html`<nav class="strip" aria-label="Tabs">
        <button class="tab-search" aria-label="Search tabs">${chevronIcon}</button>
        <div class="tabs">${TABS.map((tab) => this.renderTab(tab))}</div>
        <button class="new-tab" aria-label="New tab">${plusIcon}</button>
        <div class="window-controls">
          <button aria-label="Minimize">${minimizeIcon}</button>
          <button aria-label="Restore">${restoreIcon}</button>
          <button aria-label="Close">${windowCloseIcon}</button>
        </div>
      </nav>
      <header class="toolbar">
        <button class="muted" aria-label="Back">${backIcon}</button>
        <button class="muted" aria-label="Forward">${forwardIcon}</button>
        <button aria-label="Reload">${reloadIcon}</button>
        <div class="address">
          <button class="site-info" aria-label="Site information">${infoIcon}</button>
          <span class="url"><span class="host">localhost</span>:8501</span>
          <button aria-label="Bookmark this page">${starIcon}</button>
        </div>
        ${EXTENSIONS.map((item) => html`<button aria-label=${item.name}>${item.icon}</button>`)}
        <span class="rule"></span>
        <button aria-label="Profile">${avatarIcon}</button>
        <button aria-label="Browser menu">${dotsIcon}</button>
      </header>`;
  }

  private renderPage() {
    const { before, thumb, after } = SCROLL_TRACK;
    const track = styleMap({ gridTemplateRows: `${before}fr ${thumb}fr ${after}fr` });
    return html`<main class="page">
      <div class="chat">
        <section class="messages" aria-label="Conversation">
          ${MESSAGES.map((m) => html`<chat-message .role=${m.role} .text=${m.text}></chat-message>`)}
        </section>
        <form class="composer" @submit=${(e: Event) => e.preventDefault()}>
          <input type="text" placeholder="Type something..." aria-label="Type something" />
          <button aria-label="Send">${sendIcon}</button>
        </form>
      </div>
      <div class="scrollbar">
        ${icon(10, 5, "0 0 10 5", svg`<path fill="currentColor" d="m5 0 5 5H0z"/>`)}
        <div class="track" style=${track}><div class="thumb"></div></div>
        ${icon(10, 5, "0 0 10 5", svg`<path fill="currentColor" d="M0 0h10L5 5z"/>`)}
      </div>
      <div class="page-actions">
        <button>Deploy</button>
        <button class="page-menu" aria-label="Main menu">${dotsIcon}</button>
      </div>
    </main>`;
  }

  private renderTaskbar() {
    return html`<footer class="taskbar">
      <button class="start" aria-label="Start">${windowsIcon}</button>
      <div class="search">
        ${searchIcon}
        <input type="text" placeholder="Type here to search" aria-label="Type here to search" />
        ${meerkats}
      </div>
      <div class="apps">
        ${APPS.map(
          (app) => html`<button
            class=${classMap({ app: true, current: app.state === "current", open: app.state === "open" })}
            aria-label=${app.name}
          >
            ${app.icon}
            ${app.badge ? html`<span class="badge-under"></span><span class="badge">${app.badge}</span>` : nothing}
          </button>`,
        )}
      </div>
      <button class="weather">
        <span class="weather-icon">${cloudIcon}<span class="alert">1</span></span>
        <span>33°C</span>
        <span>Mostly cloudy</span>
      </button>
      <div class="tray">
        <button aria-label="Show hidden icons">${caretUpIcon}</button>
        <button aria-label="Battery">${batteryIcon}</button>
        <button aria-label="Volume">${muteIcon}</button>
        <button aria-label="Network">${wifiIcon}</button>
        <button class="language">ENG</button>
        <button class="clock"><span>15:20</span><span>03-07-2025</span></button>
        <button class="notices" aria-label="Notifications">${noticeIcon}</button>
        <button class="desktop" aria-label="Show desktop"></button>
      </div>
    </footer>`;
  }

  render() {
    return html`${this.renderBrowser()}${this.renderPage()}${this.renderTaskbar()}`;
  }
}
